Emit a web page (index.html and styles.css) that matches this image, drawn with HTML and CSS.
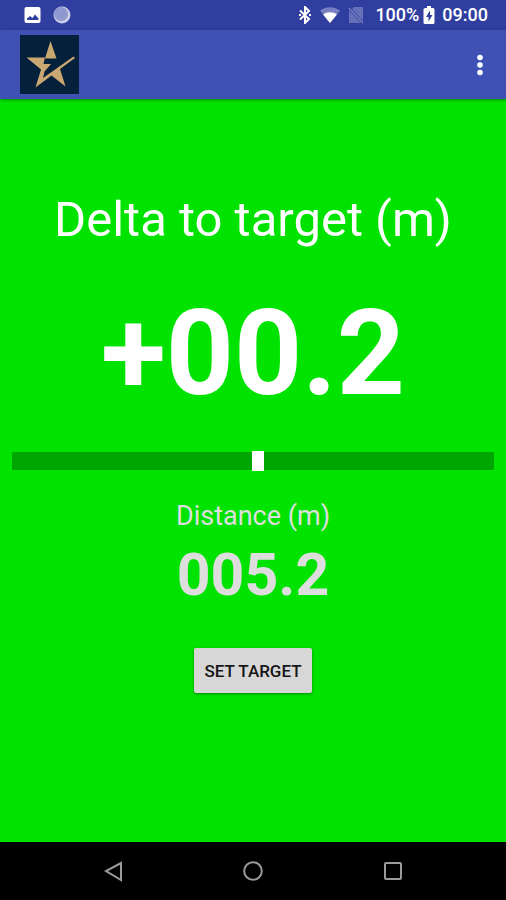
FILE: index.html
```html
<!DOCTYPE html>
<html lang="en">
<head>
<meta charset="utf-8">
<meta name="viewport" content="width=device-width, initial-scale=1">
<title>Delta to target</title>
<link rel="stylesheet" href="styles.css">
</head>
<body>
<div class="status">
  <div class="status-group notices">
    <svg width="18" height="18" viewBox="0 0 18 18" aria-hidden="true"><rect x="0.500" y="1" width="16" height="16" rx="2" fill="#fff"/><path d="M3 14V12.500L6 10l2.500 2 2.500-3.500 3.500 4V14z" fill="#303f9f"/></svg>
    <svg width="18" height="18" viewBox="0 0 18 18" aria-hidden="true"><circle cx="9" cy="9" r="8.500" fill="#c9cdea"/><circle cx="8" cy="8" r="7" fill="#8f98cf"/></svg>
  </div>
  <div class="status-group system">
    <svg class="bluetooth" width="14" height="18" viewBox="0 0 14 18" fill="none" stroke="#fff" stroke-width="2" aria-hidden="true"><path d="m2 4.500 9 8.500-4 4V1l4 4-9 8.500"/><path d="M1 9h2M11 9h2"/></svg>
    <svg class="wifi" width="22" height="18" viewBox="0 0 22 18" aria-hidden="true"><path d="M11 17 1 4.500C7 0 15 0 21 4.500z" fill="#7680c2"/><path d="M11 17 4 8.500c4-3 10-3 14 0z" fill="#fff"/></svg>
    <svg class="signal" width="16" height="18" viewBox="0 0 16 18" aria-hidden="true"><path d="M6 1h9v14L4 3zM1 4l12 13H1z" fill="#6670b8"/><path d="m1 2 14 15" stroke="#7680c2" stroke-width="1.500"/></svg>
    <span class="level">100%</span>
    <svg class="battery" width="12" height="20" viewBox="0 0 12 20" aria-hidden="true"><path d="M4 1h4v2h2q1.500 0 1.500 1.500v13Q11.500 19 10 19H2Q.5 19 .5 17.500v-13Q.5 3 2 3h2z" fill="#fff"/><path d="M7 5.500 3 12h2.500v4.500L9.500 10H7z" fill="#303f9f"/></svg>
    <time>09:00</time>
  </div>
</div>
<header class="appbar">
  <svg class="logo" viewBox="0 0 59 59" role="img" aria-label="Star logo"><rect width="59" height="59" fill="#04203a"/><path fill="#c9a872" d="M30.500 6 36.500 23.500H25zM6.500 22.500H25L23.500 29H31L24.500 36.500 23 43 53.500 21.500 55 23 40 34 45.500 51.500 31.500 40.500 15.500 52.500 21 34.500z"/></svg>
  <button class="more" aria-label="More options"><svg width="6" height="22" viewBox="0 0 6 22" fill="#fff" aria-hidden="true"><circle cx="3" cy="3.500" r="2.800"/><circle cx="3" cy="11" r="2.800"/><circle cx="3" cy="18.500" r="2.800"/></svg></button>
</header>
<main class="content">
  <h1 class="title">Delta to target (m)</h1>
  <output class="delta">+00.2</output>
  <input class="gauge" type="range" min="-10" max="10" step="0.1" value="0.2" aria-label="Delta to target">
  <h2 class="subtitle">Distance (m)</h2>
  <output class="distance">005.2</output>
  <button class="set">SET TARGET</button>
</main>
<nav class="navbar">
  <button aria-label="Back"><svg width="20" height="22" viewBox="0 0 20 22" aria-hidden="true"><path d="M18 3v17L3 11z"/></svg></button>
  <button aria-label="Home"><svg width="20" height="22" viewBox="0 0 20 22" aria-hidden="true"><circle cx="10" cy="11" r="8.800"/></svg></button>
  <button aria-label="Recent apps"><svg width="20" height="22" viewBox="0 0 20 22" aria-hidden="true"><rect x="2" y="3" width="16" height="16" rx="1"/></svg></button>
</nav>
</body>
</html>
```
FILE: styles.css
```css
* { box-sizing: border-box; }
body {
  margin: 0;
  min-height: 100vh;
  display: flex;
  flex-direction: column;
  font-family: Roboto, "Liberation Sans", sans-serif;
  color: #fff;
  background: #00e300;
}
button { border: 0; padding: 0; background: none; font: inherit; color: inherit; }
svg { display: block; }
.status {
  height: 30px;
  padding: 0 18px 0 24px;
  display: flex;
  align-items: center;
  justify-content: space-between;
  background: #303f9f;
  font-size: 18px;
  font-weight: 500;
}
.status-group { display: flex; align-items: center; }
.notices { gap: 11px; }
.system { gap: 7px; line-height: 32px; }
.level { margin-left: 4px; }
.battery { margin-left: -3px; }
.appbar {
  height: 69px;
  padding: 0 20px;
  display: flex;
  align-items: center;
  justify-content: space-between;
  background: #3f51b5;
  box-shadow: 0 1px 3px rgba(0, 0, 0, 0.4);
}
.logo { width: 59px; height: 59px; }
.more { padding: 0 3px; }
.content {
  flex: 1;
  padding: 91px 12px 0;
  display: flex;
  flex-direction: column;
  align-items: center;
}
.title { margin: 0; font-size: 49px; line-height: 60px; font-weight: 400; }
.delta { margin-top: 34px; font-size: 119px; line-height: 140px; font-weight: 700; }
.gauge {
  appearance: none;
  width: 100%;
  height: 20px;
  margin: 27px 0 0;
  background: linear-gradient(#00a600, #00a600) center / 100% 18px no-repeat;
}
.gauge::-webkit-slider-thumb { appearance: none; width: 12px; height: 20px; background: #fff; }
.subtitle { margin: 29px 0 0; color: #dedede; font-size: 27px; line-height: 32px; font-weight: 400; }
.distance { margin-top: 8px; color: #dedede; font-size: 59px; line-height: 70px; font-weight: 700; }
.set {
  margin-top: 38px;
  padding: 0 10px;
  height: 45px;
  border-radius: 2px;
  background: #d7d7d7;
  color: #151515;
  font-size: 17px;
  font-weight: 500;
  box-shadow: 0 1px 3px rgba(0, 0, 0, 0.4);
}
.navbar {
  height: 58px;
  display: flex;
  align-items: center;
  justify-content: center;
  gap: 120px;
  background: #000;
}
.navbar svg { fill: none; stroke: #9a9a9a; stroke-width: 2; }
```
